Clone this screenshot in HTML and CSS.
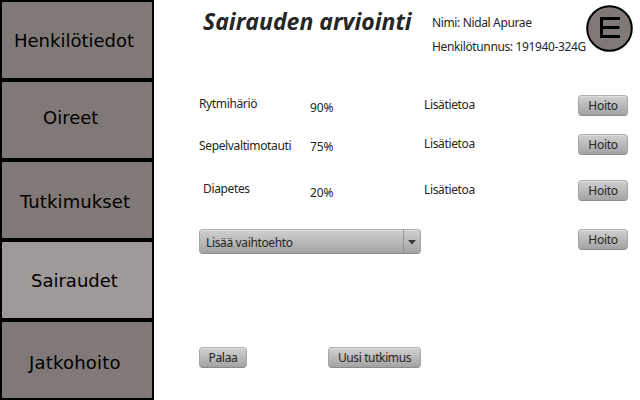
FILE: index.html
```html
<!DOCTYPE html>
<html lang="fi">
<head>
<meta charset="utf-8">
<title>Sairauden arviointi</title>
<link rel="stylesheet" href="styles.css">
</head>
<body>
<div class="app">
  <nav class="sidebar">
    <a class="tab personal"><span>Henkilötiedot</span></a>
    <a class="tab symptoms"><span>Oireet</span></a>
    <a class="tab tests"><span>Tutkimukset</span></a>
    <a class="tab diseases active"><span>Sairaudet</span></a>
    <a class="tab followup"><span>Jatkohoito</span></a>
  </nav>
  <main class="content">
    <header class="header">
      <h1 class="title">Sairauden arviointi</h1>
      <div class="patient">
        <div class="patient-name">Nimi: Nidal Apurae</div>
        <div class="patient-id">Henkilötunnus: 191940-324G</div>
      </div>
      <svg class="logo" width="48" height="48" viewBox="0 0 48 48">
        <circle cx="24.500" cy="24.500" r="22.300" fill="#807978" stroke="#000" stroke-width="2"/>
        <path d="M35 14.500H16.500V32.500H35M16.500 23.500H34.500" fill="none" stroke="#000" stroke-width="3"/>
      </svg>
    </header>
    <section class="row row-first">
      <span class="name">Rytmihäriö</span><span class="percent">90%</span><span class="info">Lisätietoa</span><button class="button">Hoito</button>
    </section>
    <section class="row row-second">
      <span class="name">Sepelvaltimotauti</span><span class="percent">75%</span><span class="info">Lisätietoa</span><button class="button">Hoito</button>
    </section>
    <section class="row row-third">
      <span class="name">Diapetes</span><span class="percent">20%</span><span class="info">Lisätietoa</span><button class="button">Hoito</button>
    </section>
    <section class="row row-add">
      <div class="select"><span class="select-text">Lisää vaihtoehto</span><span class="select-arrow"><svg width="8" height="5" viewBox="0 0 8 5"><path d="M0 0H8L4 4.500Z" fill="#3b3b3b"/></svg></span></div>
      <button class="button">Hoito</button>
    </section>
    <footer class="actions">
      <button class="button back">Palaa</button>
      <button class="button new-test">Uusi tutkimus</button>
    </footer>
  </main>
</div>
</body>
</html>
```
FILE: styles.css
```css
* { box-sizing: border-box; }
body { margin: 0; background: #fff; color: #262626; font: 12px/16px "Noto Sans", "Open Sans", sans-serif; letter-spacing: -0.36px; }
.app { display: flex; width: 640px; height: 400px; overflow: hidden; }
.sidebar { width: 154px; height: 400px; padding: 2px; background: #000; display: flex; flex-direction: column; gap: 4px; flex: none; }
.tab { height: 76px; background: #807978; border-radius: 1px; color: #000; font: 18px/22px "DejaVu Sans", sans-serif; letter-spacing: 0; white-space: nowrap; }
.tab span { display: block; }
.tab.active { background: #9f9999; }
.personal { padding: 28px 0 0 12px; }
.symptoms { padding: 25px 0 0 41px; }
.tests { padding: 29px 0 0 18px; letter-spacing: 0.1px; }
.diseases { padding: 28px 0 0 29px; }
.followup { padding: 30px 0 0 27px; letter-spacing: 0.2px; }
.content { width: 486px; padding-left: 45px; }
.header { display: flex; height: 80px; align-items: flex-start; }
.title { width: 233px; margin: 6px 0 0; padding-left: 4px; font: italic bold 23px/30px "Open Sans", sans-serif; letter-spacing: 0; white-space: nowrap; }
.patient { width: 153px; padding-top: 15px; white-space: nowrap; display: grid; gap: 8px; }
.patient-id { letter-spacing: -0.37px; }
.logo { margin-top: 4px; flex: none; }
.row { display: grid; grid-template-columns: 111px 114px 154px 50px; align-items: start; white-space: nowrap; }
.row-first { height: 46px; padding-top: 15px; }
.row-second { height: 42px; padding-top: 8px; }
.row-third { height: 46px; padding-top: 12px; }
.row-add { height: 60px; padding-top: 15px; }
.percent { letter-spacing: -0.1px; }
.row-first .name { margin-top: 1px; }
.row-first .info { margin-top: 2px; }
.row-first .percent { margin-top: 5px; }
.row-second .name { margin-top: 4px; }
.row-second .percent { margin-top: 5px; }
.row-second .info { margin-top: 2px; }
.row-third .name { padding-left: 4px; margin-top: 1px; }
.row-third .percent { margin-top: 5px; }
.row-third .info { margin-top: 2px; }
.button { height: 21px; width: 50px; padding: 0; border: 1px solid; border-color: #aeaeae #a4a4a4 #8c8c8c; border-radius: 4px; background: linear-gradient(#d0d0d0, #a3a3a3); box-shadow: inset 0 1px #dedede; color: #262626; font: inherit; line-height: 19px; letter-spacing: -0.3px; white-space: nowrap; }
.select { grid-column: 1 / 4; width: 222px; height: 25px; display: flex; border: 1px solid; border-color: #aeaeae #a4a4a4 #8c8c8c; border-radius: 4px; background: linear-gradient(#d0d0d0, #a3a3a3); box-shadow: inset 0 1px #dedede; }
.select-text { flex: 1; padding: 5px 0 0 6px; }
.select-arrow { width: 17px; padding-top: 1px; border-left: 1px solid #939393; display: flex; align-items: center; justify-content: center; }
.actions { display: flex; gap: 81px; padding-top: 73px; }
.back { width: 48px; }
.new-test { width: 93px; letter-spacing: -0.38px; }
```
